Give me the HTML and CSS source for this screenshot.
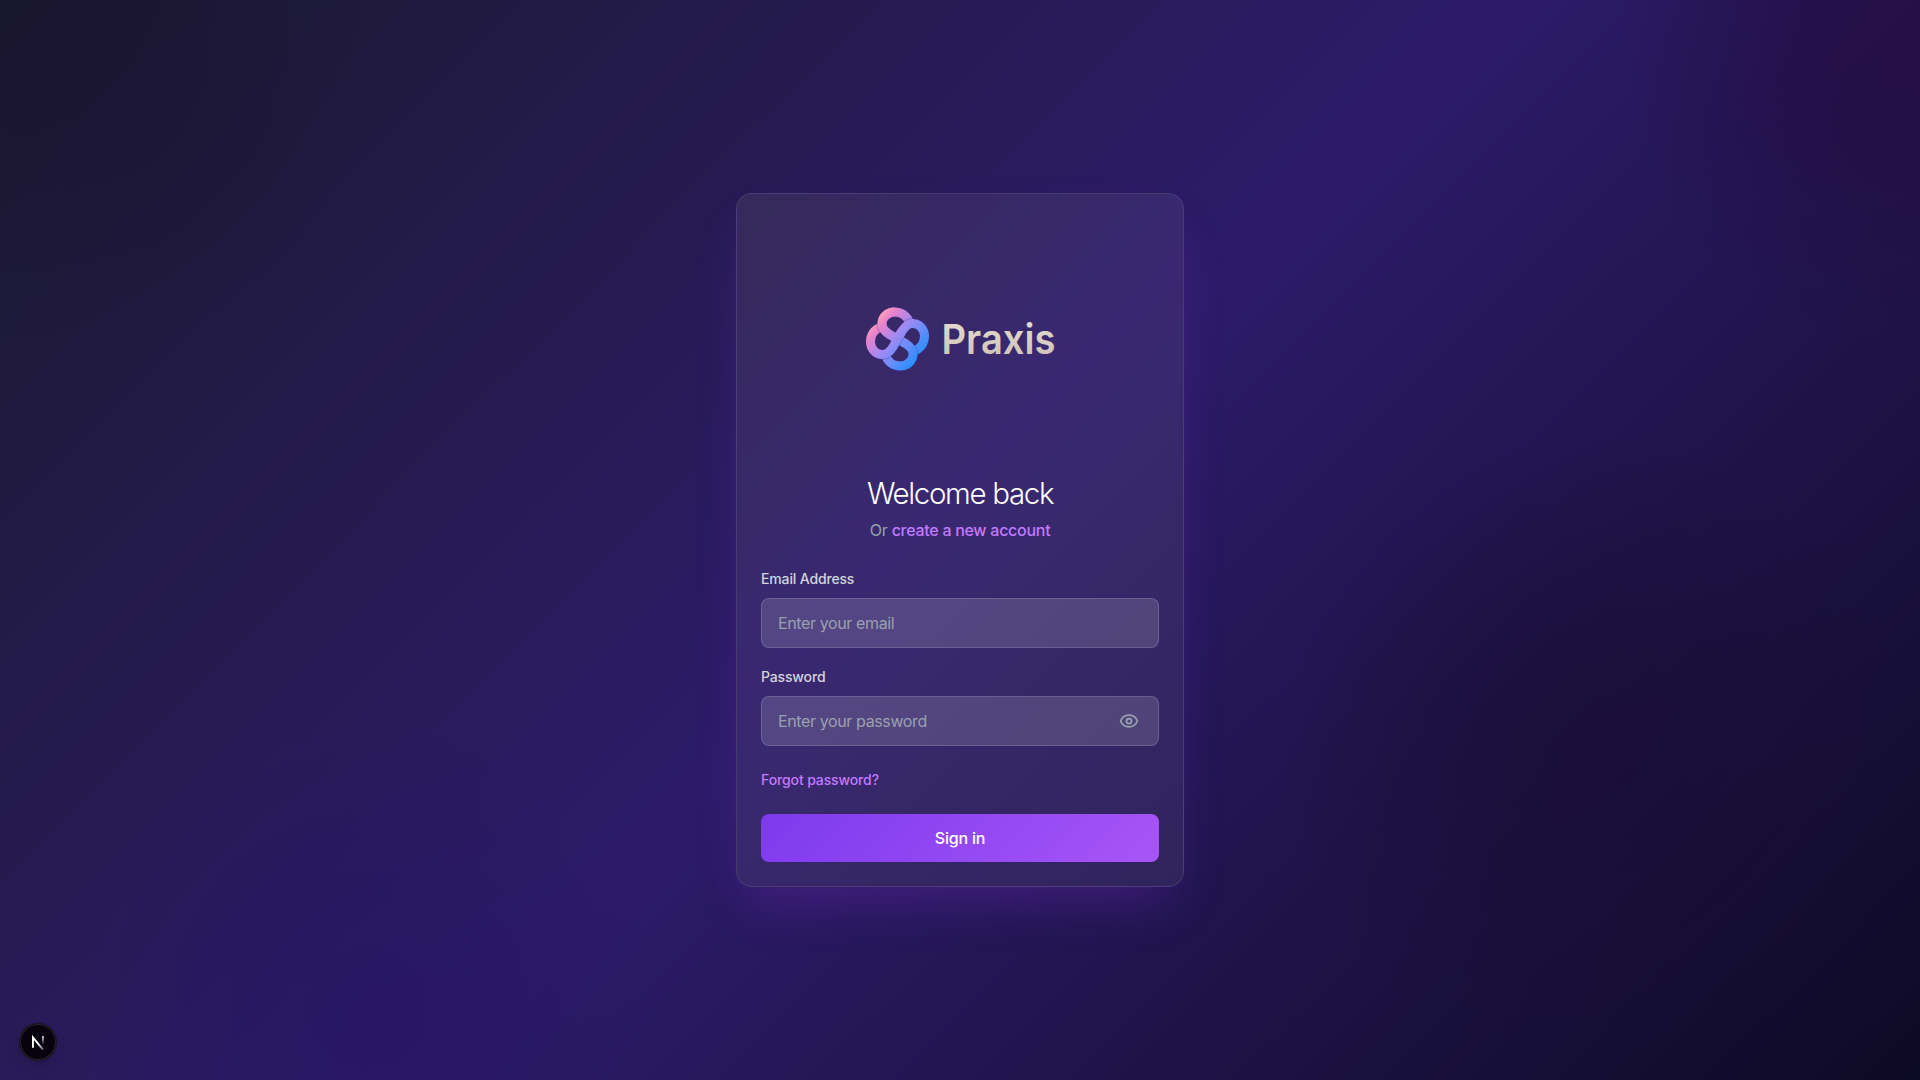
FILE: index.html
```html
<!DOCTYPE html>
<html lang="en">
<head>
<meta charset="utf-8">
<title>Praxis</title>
<link rel="stylesheet" href="styles.css">
</head>
<body>
<main class="page">
  <section class="card">
    <div class="brand">
      <svg class="brand-logo" viewBox="0 0 200 76" role="img" aria-label="Praxis">
        <defs>
          <linearGradient id="knot" gradientUnits="userSpaceOnUse" x1="-27" y1="-20" x2="20" y2="22">
            <stop offset="0" stop-color="#ffb3a8"/>
            <stop offset=".2" stop-color="#ea82cc"/>
            <stop offset=".48" stop-color="#a08af2"/>
            <stop offset=".72" stop-color="#688df8"/>
            <stop offset="1" stop-color="#2490ff"/>
          </linearGradient>
          <linearGradient id="word" x1="0" y1="0" x2="0" y2="1">
            <stop offset="0" stop-color="#e6dfd5"/>
            <stop offset="1" stop-color="#cdbfb5"/>
          </linearGradient>
        </defs>
        <g transform="translate(37.5 39)">
          <path class="edge" d="M0 0-8-4.5C-14-8.5-16-13-15.5-16-15-22.5-9-27-3-27 4-27 10-23 12-16"/>
          <path class="band" d="M0 0-8-4.5C-14-8.5-16-13-15.5-16-15-22.5-9-27-3-27 4-27 10-23 12-16"/>
          <path class="edge" d="M0 0 4.5-8C8.5-14 13-16 16-15.5 22.5-15 27-9 27-3 27 4 23 10 16 12"/>
          <path class="band" d="M0 0 4.5-8C8.5-14 13-16 16-15.5 22.5-15 27-9 27-3 27 4 23 10 16 12"/>
          <path class="edge" d="M0 0 8 4.5C14 8.5 16 13 15.5 16 15 22.5 9 27 3 27-4 27-10 23-12 16"/>
          <path class="band" d="M0 0 8 4.5C14 8.5 16 13 15.5 16 15 22.5 9 27 3 27-4 27-10 23-12 16"/>
          <path class="edge" d="M2-3.6-4.5 8C-8.5 14-13 16-16 15.5-22.5 15-27 9-27 3-27-4-23-10-16-12"/>
          <path class="band" d="M4.5-8-4.5 8C-8.5 14-13 16-16 15.5-22.5 15-27 9-27 3-27-4-23-10-16-12"/>
          <path class="edge" d="M-4-2.3-8-4.5C-14-8.5-16-13-15.5-16-15.2-19-14-21.5-12-23.5"/>
          <path class="band" d="M-1-.6-8-4.5C-14-8.5-16-13-15.5-16-15-22.5-9-27-3-27"/>
        </g>
        <text class="wordmark" x="81.5" y="53.5" textLength="114" lengthAdjust="spacingAndGlyphs">Praxis</text>
      </svg>
    </div>
    <h1 class="title">Welcome back</h1>
    <p class="subtitle">Or <a class="link">create a new account</a></p>
    <form class="form">
      <div class="field">
        <label class="label" for="email">Email Address</label>
        <input class="input" id="email" type="email" placeholder="Enter your email">
      </div>
      <div class="field">
        <label class="label" for="password">Password</label>
        <div class="password">
          <input class="input" id="password" type="password" placeholder="Enter your password">
          <svg class="eye" viewBox="0 0 24 24"><path d="M2.06 12.35a1 1 0 0 1 0-.7 10.75 10.75 0 0 1 19.88 0 1 1 0 0 1 0 .7 10.75 10.75 0 0 1-19.88 0"/><circle cx="12" cy="12" r="3"/></svg>
        </div>
      </div>
      <a class="link forgot">Forgot password?</a>
      <button class="submit" type="button">Sign in</button>
    </form>
  </section>
</main>
<div class="badge">
  <svg class="badge-icon" viewBox="0 0 40 40">
    <defs>
      <linearGradient id="n1" gradientUnits="userSpaceOnUse" x1="21" y1="21" x2="28" y2="30"><stop stop-color="#fff"/><stop offset="1" stop-color="#fff" stop-opacity=".15"/></linearGradient>
      <linearGradient id="n2" gradientUnits="userSpaceOnUse" x1="26" y1="13" x2="26" y2="23"><stop stop-color="#fff"/><stop offset="1" stop-color="#fff" stop-opacity="0"/></linearGradient>
    </defs>
    <path d="M14.4 26.5V15L25.5 28.5" fill="none" stroke="url(#n1)" stroke-width="2.1"/>
    <path d="M25.5 13.5V24" fill="none" stroke="url(#n2)" stroke-width="2"/>
  </svg>
</div>
</body>
</html>
```
FILE: styles.css
```css
* { box-sizing: border-box; }

body {
  margin: 0;
  font-family: Inter, "Liberation Sans", sans-serif;
  font-size: 16px;
  line-height: 24px;
  color: #fff;
}

.page {
  min-height: 100vh;
  display: flex;
  align-items: center;
  justify-content: center;
  background:
    radial-gradient(circle 300px at 1920px 50px, rgba(36, 12, 66, .75), rgba(36, 12, 66, .6) 40%, rgba(36, 12, 66, 0)),
    radial-gradient(circle 320px at 1600px 750px, rgba(26, 12, 50, .6), rgba(26, 12, 50, .38) 45%, rgba(26, 12, 50, 0)),
    radial-gradient(circle 290px at 370px 1010px, rgba(38, 20, 98, .65), rgba(38, 20, 98, .4) 45%, rgba(38, 20, 98, 0)),
    radial-gradient(circle 290px at 80px 60px, rgba(24, 18, 48, .6), rgba(24, 18, 48, .4) 40%, rgba(24, 18, 48, 0)),
    linear-gradient(135deg, #1a1a2e 0%, #2d1b69 50%, #0d0a24 100%);
}

.card {
  width: 448px;
  padding: 24px;
  border: 1px solid rgba(255, 255, 255, .1);
  border-radius: 16px;
  background: linear-gradient(135deg, #36295a 0%, #392871 45%, #38286d 55%, #30245c 100%);
  box-shadow: 0 25px 50px -12px rgba(147, 51, 234, .25);
}

.brand {
  height: 240px;
  margin-bottom: 17px;
  display: flex;
  align-items: center;
  justify-content: center;
}

.brand-logo { width: 200px; height: 76px; overflow: visible; }
.band { fill: none; stroke: url(#knot); stroke-width: 9; }
.edge { fill: none; stroke: rgba(62, 50, 140, .4); stroke-width: 10.5; }
.wordmark { font-size: 41px; font-weight: 600; fill: url(#word); }

.title {
  margin: 0 0 7px;
  font-size: 29.5px;
  line-height: 36px;
  font-weight: 300;
  letter-spacing: -1.35px;
  text-align: center;
}

.subtitle { margin: 0 0 28px; text-align: center; letter-spacing: -.28px; color: #99a1af; }
.link { color: #c27aff; font-weight: 450; }

.form { display: flex; flex-direction: column; }
.field { display: flex; flex-direction: column; gap: 9px; margin: -1px 0 20px; }
.label { font-size: 14px; line-height: 20px; font-weight: 450; letter-spacing: -.15px; color: #d1d5dc; }

.input {
  width: 100%;
  height: 50px;
  padding: 0 16px;
  border: 1px solid rgba(255, 255, 255, .15);
  border-radius: 8px;
  background: rgba(255, 255, 255, .14);
  color: #fff;
  font: inherit;
  letter-spacing: -.38px;
}
.input::placeholder { color: #99a1af; opacity: 1; }

.password { position: relative; display: flex; }
.eye {
  position: absolute;
  right: 20px;
  top: 15px;
  width: 20px;
  height: 20px;
  fill: none;
  stroke: #99a1af;
  stroke-width: 2.1;
  stroke-linecap: round;
  stroke-linejoin: round;
}

.forgot { margin: 4px 0 24px; font-size: 14px; line-height: 20px; letter-spacing: -.12px; }

.submit {
  height: 48px;
  border: 0;
  border-radius: 8px;
  background: linear-gradient(135deg, #7c3aed, #a855f7);
  color: #fff;
  font: inherit;
  font-weight: 500;
  letter-spacing: -.2px;
}

.badge {
  position: fixed;
  left: 20px;
  bottom: 20px;
  width: 36px;
  height: 36px;
  border-radius: 50%;
  background: #06030f;
  box-shadow: 0 0 0 1px #171717, inset 0 0 0 1px #25232b, 0 8px 16px -4px rgba(0, 0, 0, .2);
}
.badge-icon { display: block; width: 36px; height: 36px; }
```
